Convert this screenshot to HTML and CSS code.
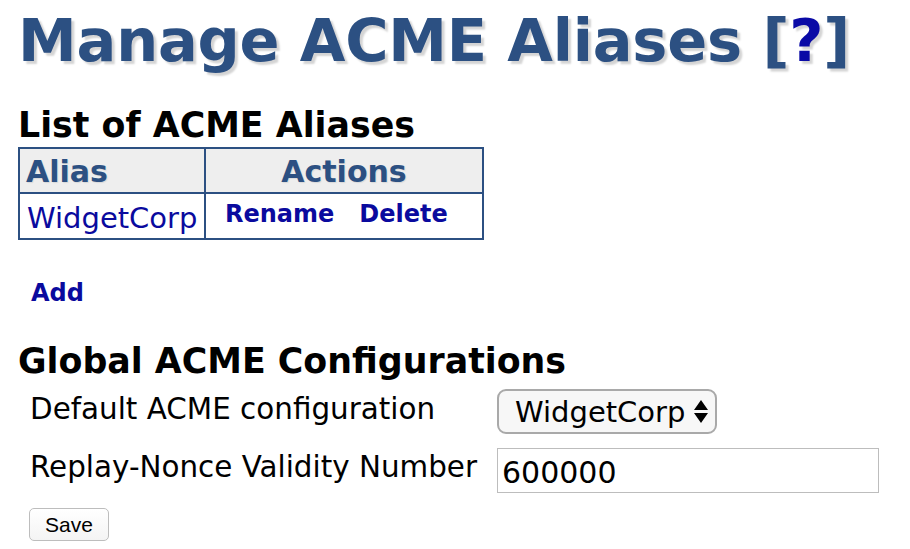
FILE: index.html
```html
<!DOCTYPE html>
<html>
<head>
<meta charset="utf-8">
<title>Manage ACME Aliases</title>
<link rel="stylesheet" href="styles.css">
</head>
<body>
<h1 class="title">Manage ACME Aliases <span class="help">[<a href="#">?</a>]</span></h1>
<h2 class="section list-heading">List of ACME Aliases</h2>
<table class="aliases">
  <thead>
    <tr><th class="col-alias">Alias</th><th class="col-actions">Actions</th></tr>
  </thead>
  <tbody>
    <tr>
      <td class="alias-name"><a href="#">WidgetCorp</a></td>
      <td class="actions"><div class="action-links"><a href="#">Rename</a><a href="#">Delete</a></div></td>
    </tr>
  </tbody>
</table>
<div class="add-row"><a href="#">Add</a></div>
<h2 class="section global-heading">Global ACME Configurations</h2>
<form class="config">
  <label class="cfg-label first" for="defcfg">Default ACME configuration</label>
  <div class="select-wrap">
    <select id="defcfg" class="cfg-select"><option>WidgetCorp</option></select>
    <svg class="select-arrows" width="14" height="24" viewBox="0 0 14 24" aria-hidden="true"><path d="M7 0 L14 10 L0 10 Z M0 13 L14 13 L7 23 Z" fill="#000"/></svg>
  </div>
  <label class="cfg-label second" for="nonce">Replay-Nonce Validity Number</label>
  <input id="nonce" class="cfg-input" type="text" value="600000">
  <div class="save-row"><button type="button" class="save-btn">Save</button></div>
</form>
</body>
</html>
```
FILE: styles.css
```css
html, body {
  margin: 0;
  padding: 0;
  background: #fff;
}
body {
  font-family: "DejaVu Sans", Verdana, sans-serif;
  color: #000;
  padding-top: 6px;
}
a {
  color: #0a0a9e;
  text-decoration: none;
}
.title {
  margin: 0 0 0 18px;
  font-size: 59px;
  line-height: 70px;
  font-weight: bold;
  color: #2c5082;
  text-shadow: 3px 3px 2px #d4d4d4;
  white-space: nowrap;
  letter-spacing: -0.2px;
}
.help a {
  color: #0a0aa6;
}
.section {
  margin: 0 0 0 18px;
  font-size: 34.8px;
  line-height: 44px;
  font-weight: bold;
  color: #000;
  white-space: nowrap;
}
.list-heading {
  margin-top: 27px;
}
.aliases {
  margin-left: 18px;
  border-collapse: collapse;
  border: 2px solid #2c5082;
  table-layout: fixed;
  width: 466px;
}
.aliases th,
.aliases td {
  border: 2px solid #2c5082;
  vertical-align: top;
}
.aliases th {
  background: #eeeeee;
  color: #2c5082;
  font-size: 30px;
  line-height: 40px;
  padding: 3px 0 0 0;
  text-shadow: 1px 1px 1px #d8d8d8;
}
.aliases .col-alias {
  text-align: left;
  padding-left: 6px;
  width: 178px;
}
.aliases .col-actions {
  text-align: center;
}
.aliases .alias-name {
  font-size: 29px;
  line-height: 40px;
  padding: 4px 0 0 7px;
  white-space: nowrap;
}
.aliases .actions {
  font-size: 24px;
  line-height: 30px;
  padding: 5px 0 0 0;
  font-weight: bold;
}
.action-links {
  display: flex;
  gap: 25px;
  padding-left: 19px;
}
.add-row {
  margin: 38px 0 0 31px;
  font-size: 24px;
  line-height: 30px;
  font-weight: bold;
}
.global-heading {
  margin-top: 31px;
}
.config {
  display: grid;
  grid-template-columns: 467px 382px;
  row-gap: 14px;
  margin: 6px 0 0 30px;
  align-items: start;
}
.cfg-label {
  font-size: 29.4px;
  white-space: nowrap;
}
.cfg-label.first {
  line-height: 40px;
}
.cfg-label.second {
  line-height: 38px;
}
.select-wrap {
  position: relative;
  width: 220px;
  height: 45px;
}
.cfg-select {
  appearance: none;
  -webkit-appearance: none;
  box-sizing: border-box;
  width: 220px;
  height: 45px;
  margin: 0;
  padding: 0 0 0 16px;
  border: 2px solid #a9a9a9;
  border-radius: 9px;
  background: #f7f7f7;
  font-family: "DejaVu Sans", Verdana, sans-serif;
  font-size: 29px;
  color: #000;
}
.select-arrows {
  position: absolute;
  left: 197px;
  top: 11px;
  pointer-events: none;
}
.cfg-input {
  box-sizing: border-box;
  width: 382px;
  height: 45px;
  margin: 0;
  padding: 4px 0 0 4px;
  border: 1px solid #bdbdbd;
  font-family: "DejaVu Sans", Verdana, sans-serif;
  font-size: 30px;
  color: #000;
}
.save-row {
  grid-column: 1 / 3;
  margin-left: -1px;
  margin-top: 1px;
}
.save-btn {
  box-sizing: border-box;
  width: 80px;
  height: 33px;
  margin: 0;
  padding: 0;
  border: 1px solid #bdbdbd;
  border-radius: 5px;
  background: linear-gradient(#ffffff, #f4f4f4);
  font-family: "Liberation Sans", Arial, sans-serif;
  font-size: 21px;
  color: #000;
}
```
